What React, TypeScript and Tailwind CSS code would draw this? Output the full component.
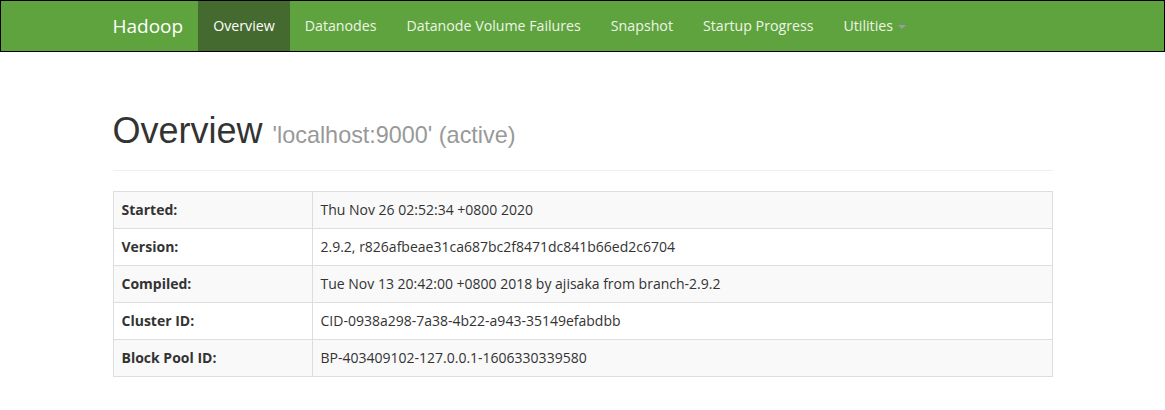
const navItems = [
  "Overview",
  "Datanodes",
  "Datanode Volume Failures",
  "Snapshot",
  "Startup Progress",
];

const rows: [string, string][] = [
  ["Started:", "Thu Nov 26 02:52:34 +0800 2020"],
  ["Version:", "2.9.2, r826afbeae31ca687bc2f8471dc841b66ed2c6704"],
  ["Compiled:", "Tue Nov 13 20:42:00 +0800 2018 by ajisaka from branch-2.9.2"],
  ["Cluster ID:", "CID-0938a298-7a38-4b22-a943-35149efabdbb"],
  ["Block Pool ID:", "BP-403409102-127.0.0.1-1606330339580"],
];

const uiFont = "font-['Open_Sans','Noto_Sans',sans-serif]";

export default function App() {
  return (
    <div className="min-h-[410px] w-[1165px] bg-white text-[#333]">
      <nav className="border border-black bg-[#5fa33e]">
        <div className={`mx-auto flex h-[50px] w-[970px] px-[15px] ${uiFont}`}>
          <a className="flex items-center pr-[15px] text-[19px] leading-5 text-white">
            Hadoop
          </a>
          <ul className="flex">
            {navItems.map((item, i) => (
              <li key={item}>
                <a
                  className={
                    i === 0
                      ? "flex h-[50px] items-center bg-[#446a2f] px-[15px] text-[14.2px] text-white"
                      : "flex h-[50px] items-center px-[15px] text-[14.2px] text-[#eef5e6]"
                  }
                >
                  {item}
                </a>
              </li>
            ))}
            <li>
              <a className="flex h-[50px] items-center px-[15px] text-[14.2px] text-[#eef5e6]">
                Utilities
                <span className="ml-[5px] mt-[2px] h-0 w-0 border-x-4 border-t-4 border-x-transparent border-t-[#9a9aa8]" />
              </a>
            </li>
          </ul>
        </div>
      </nav>

      <div className="mx-auto w-[970px] px-[15px]">
        <div className="mt-[59px] mb-5 border-b border-[#eee] pb-[9px]">
          <h1 className="mb-[10px] font-['Liberation_Sans',Arial,sans-serif] text-[36px] leading-[1.1] text-[#333]">
            Overview{" "}
            <small className="text-[23.4px] text-[#999]">'localhost:9000' (active)</small>
          </h1>
        </div>

        <table className={`w-full border-collapse border border-[#ddd] text-[14px] leading-5 ${uiFont}`}>
          <tbody>
            {rows.map(([label, value], i) => (
              <tr key={label} className={i % 2 === 0 ? "bg-[#f9f9f9]" : "bg-white"}>
                <th className="w-[199px] border border-[#ddd] p-2 text-left font-bold">
                  {label}
                </th>
                <td className="border border-[#ddd] p-2">{value}</td>
              </tr>
            ))}
          </tbody>
        </table>
      </div>
    </div>
  );
}
